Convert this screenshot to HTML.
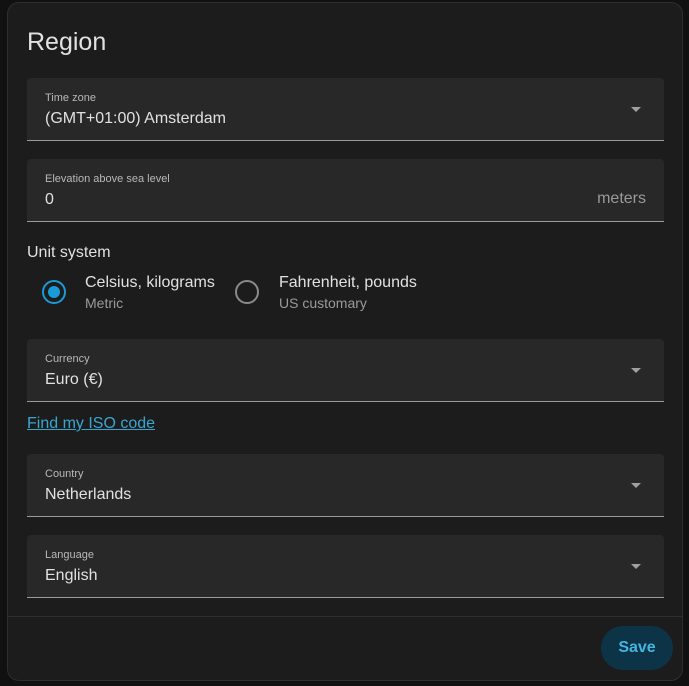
<!DOCTYPE html>
<html><head><style>
*{margin:0;padding:0;box-sizing:border-box}
body{width:689px;height:686px;background:#111;font-family:"Liberation Sans",sans-serif;position:relative;overflow:hidden}
.card{position:absolute;left:7px;top:2px;width:676px;height:679px;background:#1c1c1c;border:1px solid #2e2e2e;border-radius:12px}
.t{position:absolute;left:27px;top:28px;font-size:25px;color:#e1e1e1}
.f{position:absolute;left:27px;width:637px;height:63px;background:#282828;border-radius:4px 4px 0 0;border-bottom:1px solid #9a9a9a}
.f .l{position:absolute;left:18px;top:14px;font-size:11px;color:#b8b8b8}
.f .v{position:absolute;left:18px;top:32px;font-size:16px;color:#e1e1e1}
.f .a{position:absolute;right:23px;top:29px;width:0;height:0;border-left:5px solid transparent;border-right:5px solid transparent;border-top:5px solid #a0a0a0}
.f .u{position:absolute;right:18px;top:31px;font-size:16px;color:#9a9a9a}
.us{position:absolute;left:27px;top:244px;font-size:16px;color:#e1e1e1}
.r{position:absolute;border-radius:50%;width:24px;height:24px;border:2px solid}
.rl{position:absolute;font-size:16px;color:#e1e1e1}
.rs{position:absolute;font-size:14px;color:#9a9a9a}
.lk{position:absolute;left:27px;top:415px;font-size:16px;color:#3aa6d0;text-decoration:underline}
.dv{position:absolute;left:8px;top:616px;width:674px;height:1px;background:#2e2e2e}
.btn{position:absolute;left:601px;top:626px;width:72px;height:44px;border-radius:22px;background:#0c3446;color:#45b4e2;font-size:16px;font-weight:bold;text-align:center;line-height:44px}
</style></head><body>
<div class="card"></div>
<div class="t">Region</div>
<div class="f" style="top:78px"><div class="l">Time zone</div><div class="v">(GMT+01:00) Amsterdam</div><div class="a"></div></div>
<div class="f" style="top:159px"><div class="l">Elevation above sea level</div><div class="v">0</div><div class="u">meters</div></div>
<div class="us">Unit system</div>
<div class="r" style="left:42px;top:280px;border-color:#1a9ad6"><div style="position:absolute;left:4px;top:4px;width:12px;height:12px;border-radius:50%;background:#1a9ad6"></div></div>
<div class="rl" style="left:85px;top:274px">Celsius, kilograms</div>
<div class="rs" style="left:85px;top:295px">Metric</div>
<div class="r" style="left:235px;top:280px;border-color:#8a8a8a"></div>
<div class="rl" style="left:279px;top:274px">Fahrenheit, pounds</div>
<div class="rs" style="left:279px;top:295px">US customary</div>
<div class="f" style="top:339px"><div class="l">Currency</div><div class="v">Euro (€)</div><div class="a"></div></div>
<div class="lk">Find my ISO code</div>
<div class="f" style="top:454px"><div class="l">Country</div><div class="v">Netherlands</div><div class="a"></div></div>
<div class="f" style="top:535px"><div class="l">Language</div><div class="v">English</div><div class="a"></div></div>
<div class="dv"></div>
<div class="btn">Save</div>
</body></html>
